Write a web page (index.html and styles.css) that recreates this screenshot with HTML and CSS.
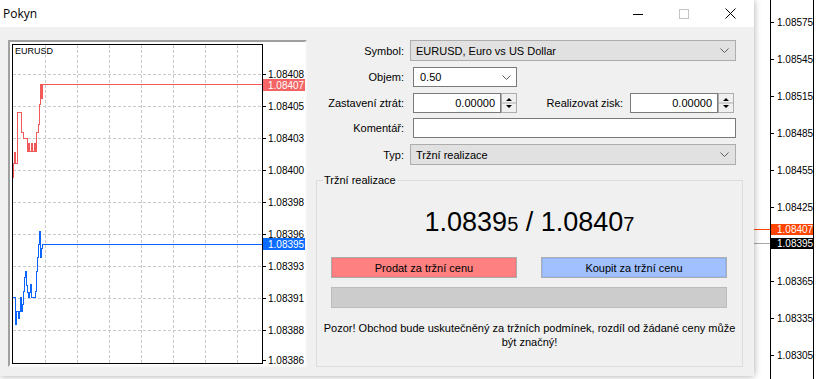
FILE: index.html
```html
<!DOCTYPE html>
<html lang="cs">
<head>
  <meta charset="UTF-8">
  <title>Pokyn</title>
  <link rel="stylesheet" href="styles.css">
</head>
<body>
  <div class="dialog">
    <div class="titlebar">
      <span class="title">Pokyn</span>
      <div class="win-buttons">
        <span class="win-btn"><svg width="10" height="10" viewBox="0 0 10 10"><path d="M0 5.5H10" stroke="#000"/></svg></span>
        <span class="win-btn"><svg width="10" height="10" viewBox="0 0 10 10"><rect x="0.5" y="0.5" width="9" height="9" fill="none" stroke="#c4c4c4"/></svg></span>
        <span class="win-btn"><svg width="11" height="11" viewBox="0 0 11 11"><path d="M0.5 0.5L10.5 10.5M10.5 0.5L0.5 10.5" stroke="#000"/></svg></span>
      </div>
    </div>

    <div class="content">
      <div class="chart-panel">
        <svg class="chart" width="295" height="323" viewBox="10 42 295 323">
          <rect x="10" y="42" width="295" height="323" fill="#fff"/>
          <path class="grid" d="M45.5 45V363M77.5 45V363M109.5 45V363M141.5 45V363M173.5 45V363M205.5 45V363M237.5 45V363M13 74.5H262M13 106.5H262M13 138.5H262M13 170.5H262M13 202.5H262M13 234.5H262M13 266.5H262M13 298.5H262M13 330.5H262"/>
          <path class="frame" d="M12.5 44V364M12 44.5H263M262.5 44V364M12 363.5H263M263 74.5h3M263 106.5h3M263 138.5h3M263 170.5h3M263 202.5h3M263 234.5h3M263 266.5h3M263 298.5h3M263 330.5h3M263 360.5h3"/>
          <text class="sym" x="15" y="51">EURUSD</text>
          <polyline class="ask" points="13.5,178 13.5,163 14.5,163 14.5,152 15.5,152 15.5,163 17.5,163 17.5,112 21.5,112 21.5,132 23.5,132 23.5,138 27.5,138 27.5,151 28.5,151 28.5,143 29.5,143 29.5,151 31.5,151 31.5,143 32.5,143 32.5,151 34.5,151 34.5,143 35.5,143 35.5,151 36.5,151 36.5,132 38.5,132 38.5,124 39.5,124 39.5,104 40.5,104 40.5,84.5 41.5,84.5 41.5,98 42.5,98 42.5,84.5 262,84.5"/>
          <polyline class="bid" points="13,297.5 15.5,297.5 15.5,324 16.5,324 16.5,311 18.5,311 18.5,318 19.5,318 19.5,311 20.5,311 20.5,297 21.5,297 21.5,311 22.5,311 22.5,304 23.5,304 23.5,291 24.5,291 24.5,277 25.5,277 25.5,271 26.5,271 26.5,285 27.5,285 27.5,292 28.5,292 28.5,297 29.5,297 29.5,292 30.5,292 30.5,284 31.5,284 31.5,297.5 35.5,297.5 35.5,291 36.5,291 36.5,271 37.5,271 37.5,257 38.5,257 38.5,244 39.5,244 39.5,231 40.5,231 40.5,257 41.5,257 41.5,248 42.5,248 42.5,244.5 262,244.5"/>
          <text x="268" y="74.5">1.08408</text>
          <text x="268" y="106.5">1.08405</text>
          <text x="268" y="138.5">1.08403</text>
          <text x="268" y="170.5">1.08400</text>
          <text x="268" y="202.5">1.08398</text>
          <text x="268" y="234.5">1.08396</text>
          <text x="268" y="266.5">1.08393</text>
          <text x="268" y="298.5">1.08391</text>
          <text x="268" y="330.5">1.08388</text>
          <text x="268" y="360.5">1.08386</text>
          <rect x="263" y="79" width="42" height="12" fill="#f46464"/>
          <text class="tag" x="268" y="85">1.08407</text>
          <rect x="263" y="238" width="42" height="12" fill="#0a6cff"/>
          <text class="tag" x="268" y="244">1.08395</text>
        </svg>
      </div>

      <div class="form">
        <div class="row">
          <span class="lbl">Symbol:</span>
          <div class="select">EURUSD, Euro vs US Dollar
            <svg width="9" height="5" viewBox="0 0 9 5"><path d="M0.5 0.5L4.5 4.5L8.5 0.5" fill="none" stroke="#606060"/></svg>
          </div>
        </div>
        <div class="row">
          <span class="lbl">Objem:</span>
          <div class="field combo">0.50
            <svg width="9" height="5" viewBox="0 0 9 5"><path d="M0.5 0.5L4.5 4.5L8.5 0.5" fill="none" stroke="#606060"/></svg>
          </div>
        </div>
        <div class="row">
          <span class="lbl">Zastavení ztrát:</span>
          <div class="field num">0.00000</div>
          <div class="spin">
            <svg width="14" height="18" viewBox="0 0 14 18"><path d="M4 7H10L7 4Z M4 11H10L7 14Z" fill="#000"/><path d="M0 9H14" stroke="#adadad"/></svg>
          </div>
          <span class="lbl lbl-tp">Realizovat zisk:</span>
          <div class="field num tp">0.00000</div>
          <div class="spin">
            <svg width="14" height="18" viewBox="0 0 14 18"><path d="M4 7H10L7 4Z M4 11H10L7 14Z" fill="#000"/><path d="M0 9H14" stroke="#adadad"/></svg>
          </div>
        </div>
        <div class="row row-comment">
          <span class="lbl">Komentář:</span>
          <div class="field comment"></div>
        </div>
        <div class="row">
          <span class="lbl">Typ:</span>
          <div class="select">Tržní realizace
            <svg width="9" height="5" viewBox="0 0 9 5"><path d="M0.5 0.5L4.5 4.5L8.5 0.5" fill="none" stroke="#606060"/></svg>
          </div>
        </div>

        <fieldset class="market">
          <legend>Tržní realizace</legend>
          <div class="price">1.0839<small>5</small> / 1.0840<small>7</small></div>
          <div class="actions">
            <button class="btn sell">Prodat za tržní cenu</button>
            <button class="btn buy">Koupit za tržní cenu</button>
          </div>
          <div class="bar"></div>
          <p class="warning">Pozor! Obchod bude uskutečněný za tržních podmínek, rozdíl od žádané ceny může<br>být značný!</p>
        </fieldset>
      </div>
    </div>
  </div>

  <div class="terminal">
    <svg width="63" height="379" viewBox="754 0 63 379">
      <rect x="754" y="0" width="63" height="379" fill="#fff"/>
      <path d="M754 229.5H771" stroke="#ff4500"/>
      <path d="M754 243.5H771" stroke="#a8a8a8"/>
      <path class="frame" d="M770.5 0V379M813.5 0V379M771 22.5h3M771 59.5h3M771 96.5h3M771 133.5h3M771 170.5h3M771 207.5h3M771 281.5h3M771 318.5h3M771 355.5h3"/>
      <text x="777" y="22.5">1.08575</text>
      <text x="777" y="59.5">1.08545</text>
      <text x="777" y="96.5">1.08515</text>
      <text x="777" y="133.5">1.08485</text>
      <text x="777" y="170.5">1.08455</text>
      <text x="777" y="207.5">1.08425</text>
      <text x="777" y="281.5">1.08365</text>
      <text x="777" y="318.5">1.08335</text>
      <text x="777" y="355.5">1.08305</text>
      <rect x="771" y="224" width="42" height="11" fill="#ff4500"/>
      <text class="tag" x="777" y="229.5">1.08407</text>
      <rect x="771" y="238" width="42" height="11" fill="#000"/>
      <text class="tag" x="777" y="243.5">1.08395</text>
    </svg>
  </div>
</body>
</html>
```

FILE: styles.css
```css
body {
  margin: 0;
  width: 817px;
  height: 379px;
  overflow: hidden;
  display: flex;
  background: #fff;
  font-family: 'Liberation Sans', Arial, sans-serif;
  font-size: 11px;
  color: #000;
}

.dialog {
  width: 754px;
  height: 376px;
  flex: none;
  position: relative;
  z-index: 1;
  display: flex;
  flex-direction: column;
  background: #f0f0f0;
  box-shadow: 0 0 7px rgba(0, 0, 0, 0.35);
}

.titlebar {
  height: 27px;
  display: flex;
  align-items: center;
  justify-content: space-between;
  background: #fff;
}

.title {
  padding-left: 3px;
  font-family: 'Open Sans', sans-serif;
  font-size: 12px;
}

.win-buttons {
  display: flex;
  margin-right: 1px;
}

.win-btn {
  width: 46px;
  height: 27px;
  display: flex;
  align-items: center;
  justify-content: center;
}

.content {
  display: flex;
  gap: 3px;
  padding: 13px 0 0 8px;
}

/* chart */
.chart-panel {
  width: 299px;
  height: 327px;
  box-sizing: border-box;
  border: 2px solid;
  border-color: #a0a0a0 #f8f8f8 #f8f8f8 #a0a0a0;
}

.chart {
  display: block;
  shape-rendering: crispEdges;
}

.chart text,
.terminal text {
  font-family: 'Liberation Sans', Arial, sans-serif;
  font-size: 10px;
  dominant-baseline: central;
  fill: #000;
}

.chart .sym {
  font-size: 9px;
}

.chart text.tag,
.terminal text.tag {
  fill: #fff;
}

.grid {
  stroke: #c8c8c8;
  stroke-dasharray: 3 2;
}

.frame {
  stroke: #000;
}

.ask,
.bid {
  fill: none;
  stroke-width: 1;
}

.ask {
  stroke: #f25a5a;
}

.bid {
  stroke: #0a64ff;
}

/* form */
.form {
  width: 433px;
  display: flex;
  flex-direction: column;
}

.row {
  display: flex;
  align-items: center;
  margin-top: 6px;
}

.row:first-child {
  margin-top: 0;
}

.row-comment {
  margin-top: 5px;
}

.lbl {
  width: 94px;
  flex: none;
  text-align: right;
}

.select {
  width: 326px;
  height: 21px;
  margin-left: 6px;
  padding: 0 6px 0 5px;
  box-sizing: border-box;
  display: flex;
  align-items: center;
  justify-content: space-between;
  background: #e1e1e1;
  border: 1px solid #adadad;
}

.field {
  height: 20px;
  margin-left: 9px;
  padding: 0 6px;
  box-sizing: border-box;
  display: flex;
  align-items: center;
  background: #fff;
  border: 1px solid #7a7a7a;
}

.combo {
  width: 104px;
  justify-content: space-between;
  padding-right: 5px;
}

.num {
  width: 88px;
  justify-content: flex-end;
  padding-right: 5px;
}

.num.tp {
  margin-left: 7px;
}

.lbl-tp {
  width: 106px;
}

.spin {
  width: 16px;
  height: 20px;
  box-sizing: border-box;
  display: flex;
  background: #f0f0f0;
  border: 1px solid #adadad;
}

.comment {
  width: 323px;
}

.market {
  width: 427px;
  height: 194px;
  margin: 8px 0 0 6px;
  padding: 19px 0 0;
  box-sizing: border-box;
  border: 1px solid #dcdcdc;
}

.market legend {
  margin-left: 6px;
  padding: 0 1px;
  line-height: 14px;
}

.price {
  text-align: center;
  font-size: 27px;
  line-height: 32px;
}

.price small {
  font-size: 20px;
}

.actions {
  display: flex;
  justify-content: space-between;
  margin: 17px 15px 0 14px;
}

.btn {
  width: 186px;
  height: 21px;
  padding: 0;
  font-family: inherit;
  font-size: 11px;
  color: #000;
  border: 1px solid #adadad;
}

.sell {
  background: #ff8080;
  box-shadow: inset 0 0 0 1px #f27a7a;
}

.buy {
  background: #a0c0ff;
  box-shadow: inset 0 0 0 1px #92b4f8;
}

.bar {
  height: 21px;
  margin: 9px 15px 0 14px;
  box-sizing: border-box;
  background: #cccccc;
  border: 1px solid #bcbcbc;
}

.warning {
  margin: 13px 0 0;
  text-align: center;
  line-height: 14px;
}

/* terminal behind the dialog */
.terminal {
  flex: 1;
}

.terminal svg {
  display: block;
  shape-rendering: crispEdges;
}
```
